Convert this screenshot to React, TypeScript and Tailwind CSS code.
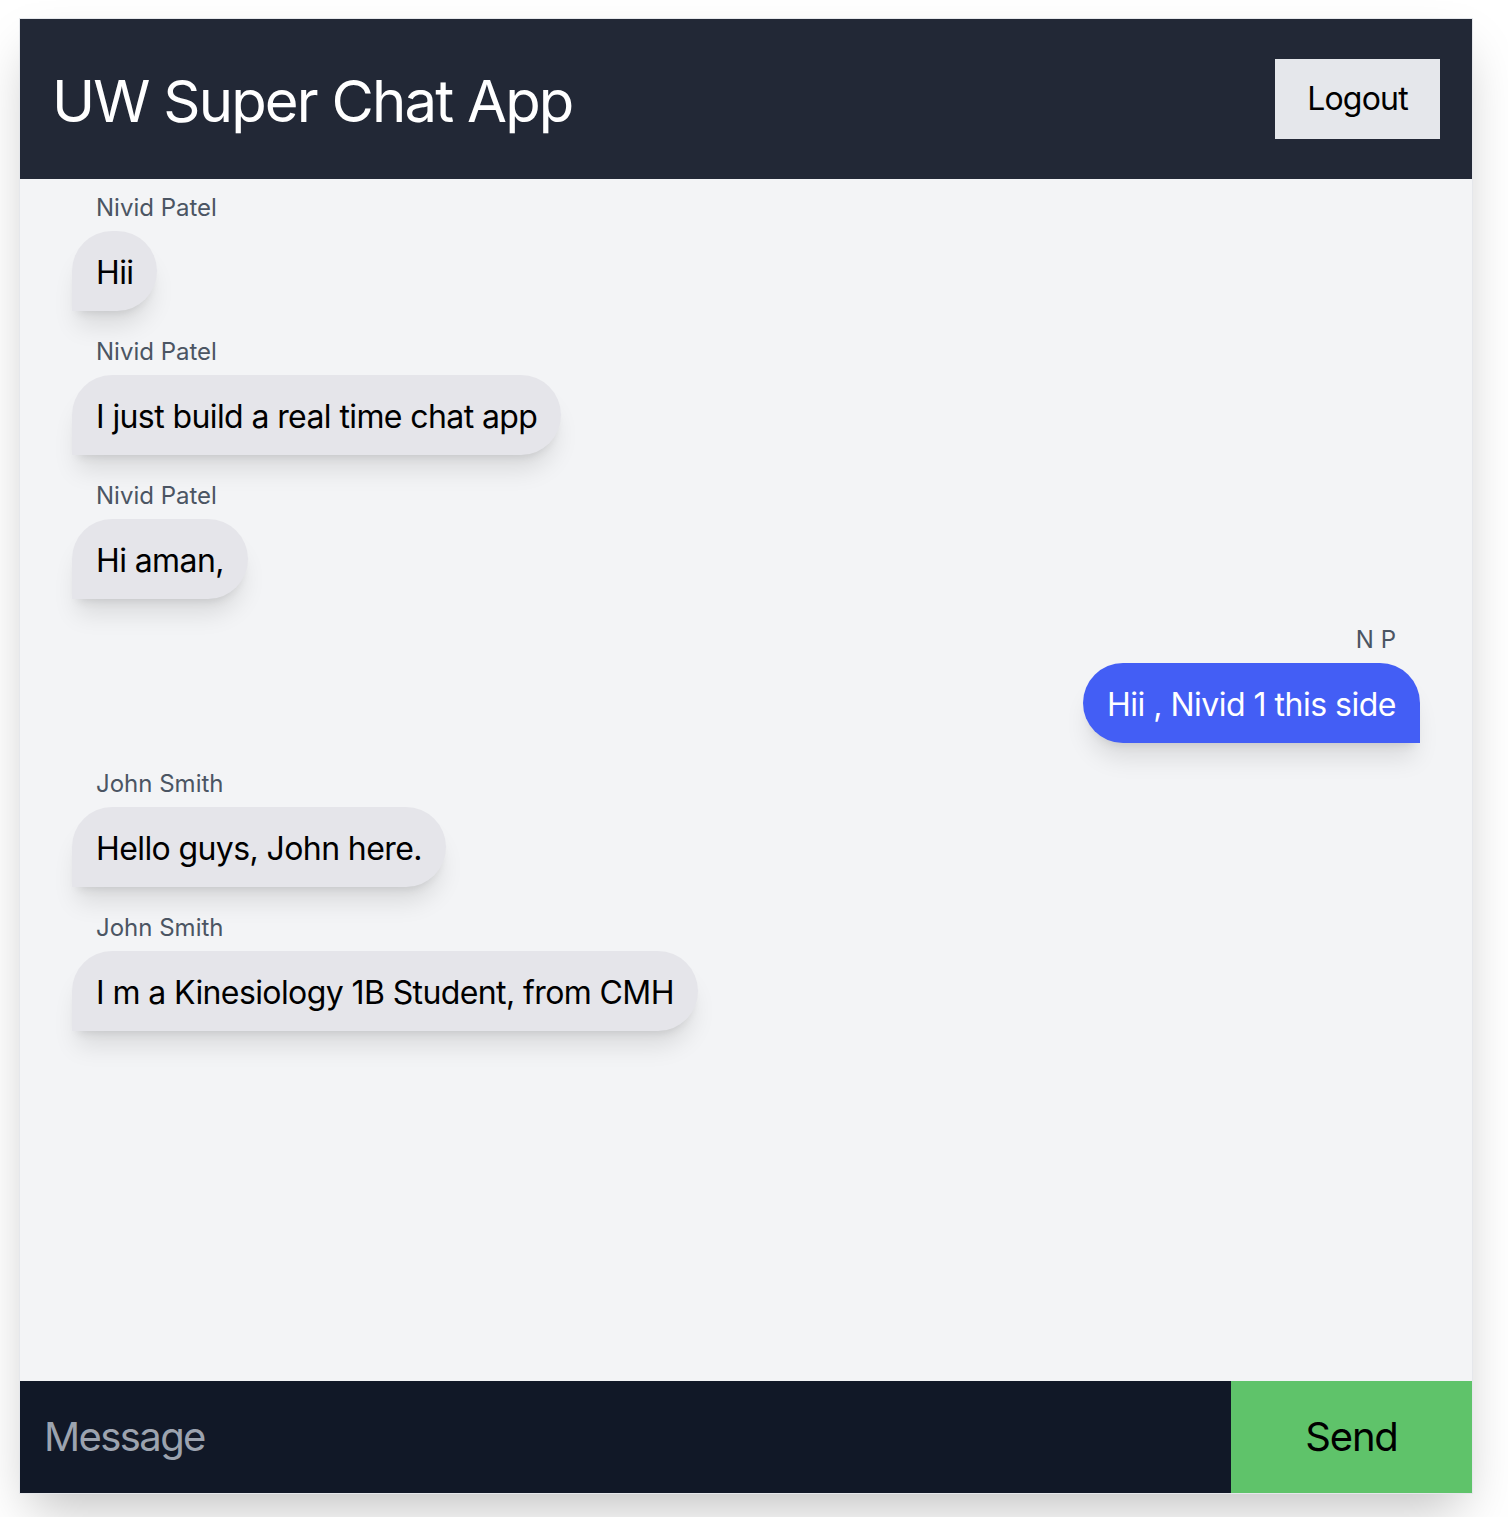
import React from 'react';

type Message = {
  id: number;
  name: string;
  text: string;
  mine?: boolean;
};

const messages: Message[] = [
  { id: 1, name: 'Nivid Patel', text: 'Hii' },
  { id: 2, name: 'Nivid Patel', text: 'I just build a real time chat app' },
  { id: 3, name: 'Nivid Patel', text: 'Hi aman,' },
  { id: 4, name: 'N P', text: 'Hii , Nivid 1 this side', mine: true },
  { id: 5, name: 'John Smith', text: 'Hello guys, John here.' },
  { id: 6, name: 'John Smith', text: 'I m a Kinesiology 1B Student, from CMH' },
];

function ChatBubble({ message }: { message: Message }) {
  if (message.mine) {
    return (
      <div className="flex flex-col items-end h-[144px]">
        <div className="h-[36px] leading-[38px] px-6 text-[24px] text-[#4b5563]">
          {message.name}
        </div>
        <div className="mt-[6px] h-[80px] flex items-center pt-[3px] px-6 rounded-tl-[40px] rounded-tr-[40px] rounded-bl-[40px] bg-[#435ef5] text-white text-[32px] tracking-[-0.5px] shadow-xl">
          {message.text}
        </div>
      </div>
    );
  }

  return (
    <div className="flex flex-col items-start h-[144px]">
      <div className="h-[36px] leading-[38px] px-6 text-[24px] text-[#4b5563]">
        {message.name}
      </div>
      <div className="mt-[6px] h-[80px] flex items-center pt-[3px] px-6 rounded-tl-[40px] rounded-tr-[40px] rounded-br-[40px] bg-[#e5e5ea] text-black text-[32px] tracking-[-0.6px] shadow-xl">
        {message.text}
      </div>
    </div>
  );
}

export default function App() {
  return (
    <div
      className="min-h-screen bg-white pt-[18px] pl-[19px]"
      style={{ fontFamily: 'Inter, "Noto Sans", sans-serif' }}
    >
      <div className="w-[1454px] border border-[#e5e7eb] shadow-2xl flex flex-col">
        {/* header */}
        <div className="h-[160px] bg-[#222836] flex items-center justify-between pl-[32px] pr-[32px]">
          <h1 className="text-white text-[58px] tracking-[-1.8px] leading-none pt-[3px]">UW Super Chat App</h1>
          <button className="w-[165px] h-[80px] bg-[#e5e7eb] text-black text-[32px] tracking-[-0.8px]">
            Logout
          </button>
        </div>

        {/* messages */}
        <div className="h-[1202px] bg-[#f3f4f6] px-[52px] pt-[10px] overflow-hidden">
          {messages.map((m) => (
            <ChatBubble key={m.id} message={m} />
          ))}
        </div>

        {/* composer */}
        <div className="h-[112px] flex">
          <input
            className="flex-1 bg-[#111827] px-6 text-[40px] tracking-[-1.6px] text-white placeholder:text-[#9ca3af] outline-none"
            placeholder="Message"
          />
          <button className="w-[241px] bg-[#5fc36a] text-black text-[40px] tracking-[-1.2px]">Send</button>
        </div>
      </div>
    </div>
  );
}
